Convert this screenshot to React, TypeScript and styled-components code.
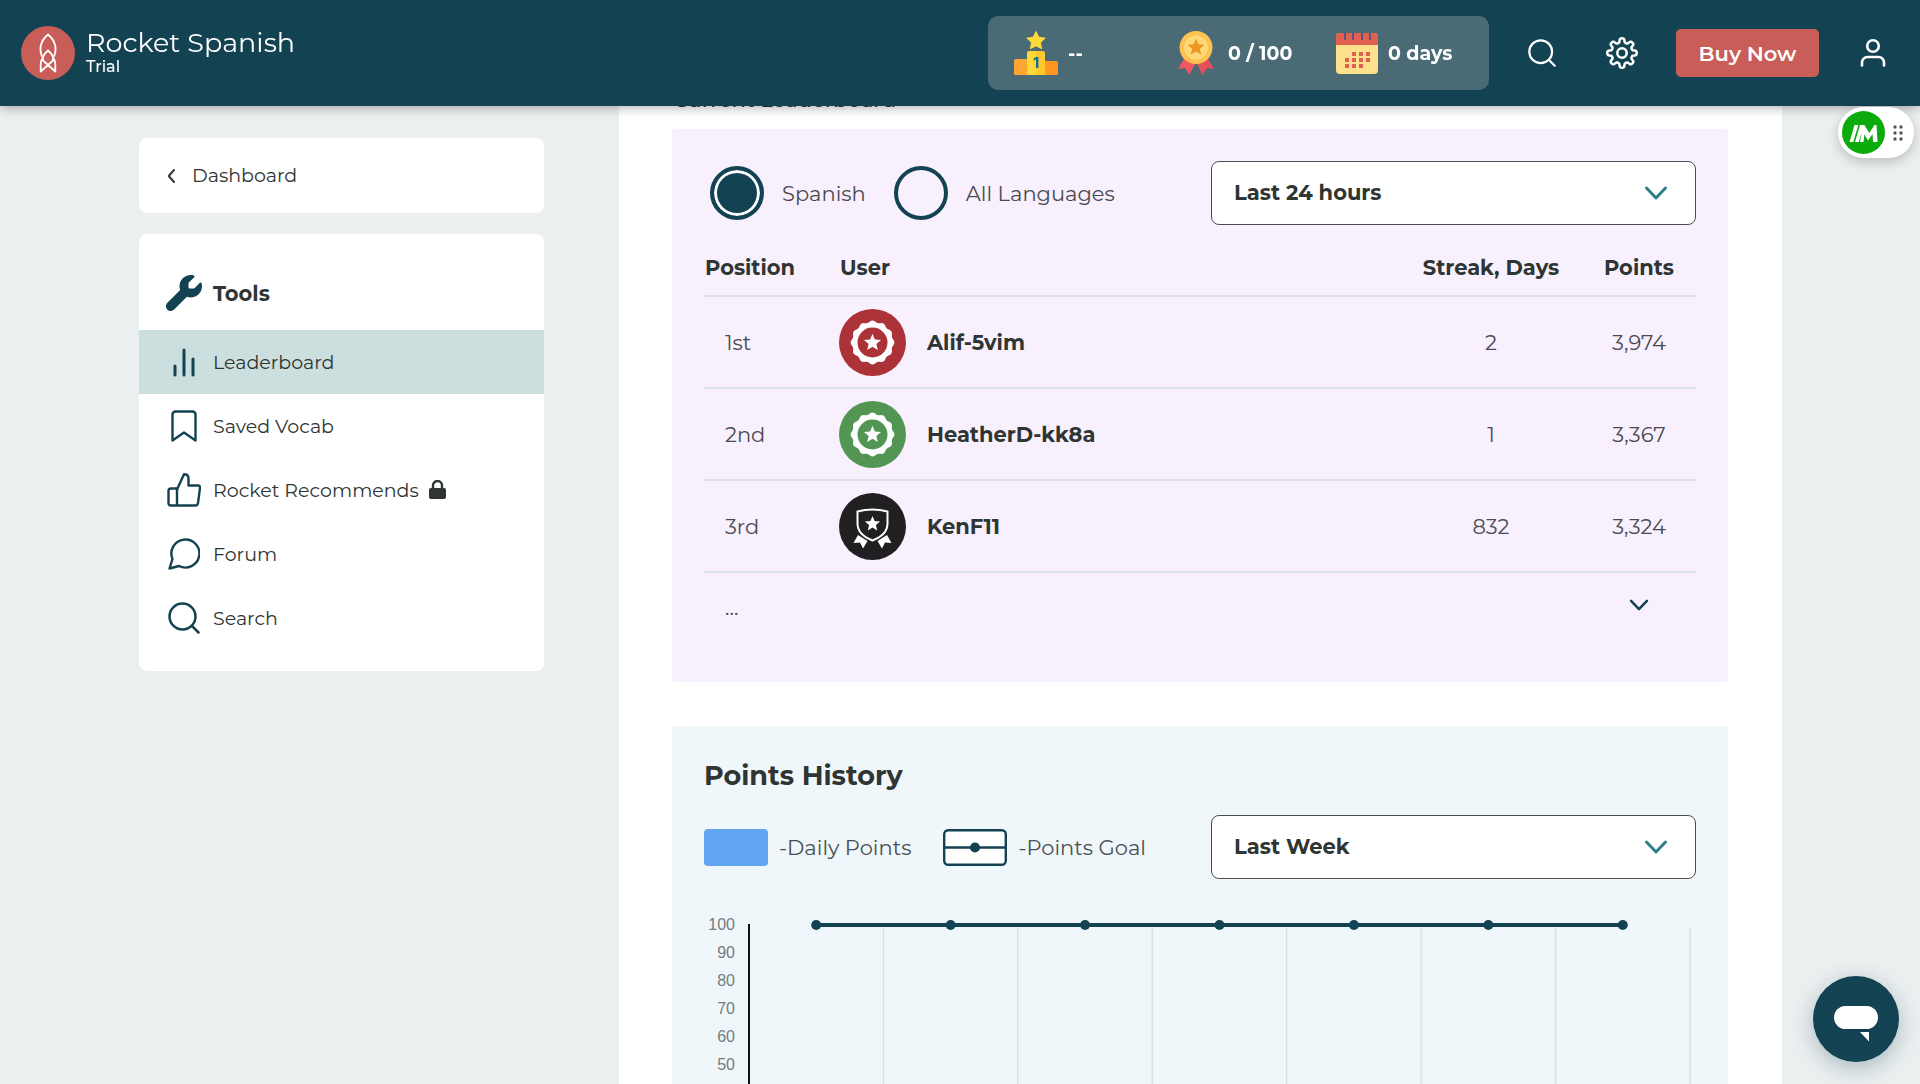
import React, { useState } from "react";
import styled, { createGlobalStyle } from "styled-components";

const navy = "#134252";
const ink = "#2e3532";
const sans = `Montserrat, Inter, "Liberation Sans", sans-serif`;

const GlobalStyle = createGlobalStyle`
  *, *::before, *::after { box-sizing: border-box; }
  body { margin: 0; background: #ebeff0; color: ${ink}; font-family: ${sans}; }
  button, select, input { font-family: inherit; color: inherit; }
  button { border: 0; padding: 0; background: none; cursor: pointer; }
  a { color: inherit; text-decoration: none; }
  h1, h2, h3, p, ul { margin: 0; padding: 0; }
  ul { list-style: none; }
  svg { display: block; flex: none; }
`;

const Shell = styled.div`
  height: 100vh;
  overflow: hidden;
`;

const TopBar = styled.header`
  position: fixed;
  inset: 0 0 auto 0;
  z-index: 10;
  height: 106px;
  padding: 0 30px 0 21px;
  display: flex;
  align-items: center;
  color: #fff;
  background: ${navy};
  box-shadow: 0 2px 10px rgba(0, 0, 0, 0.3);
`;

const Brand = styled.a`
  display: flex;
  align-items: center;
  gap: 11px;
  margin-right: auto;
`;

const BrandText = styled.span`
  padding-bottom: 4px;
`;

const BrandName = styled.span`
  display: block;
  font-size: 27px;
  line-height: 32px;
`;

const BrandPlan = styled.span`
  display: block;
  font-size: 16px;
  line-height: 16px;
  font-weight: 500;
`;

const Stats = styled.div`
  width: 501px;
  height: 74px;
  padding-left: 26px;
  display: grid;
  grid-template-columns: 160px 161px 1fr;
  align-items: center;
  border-radius: 10px;
  background: #4a6a76;
`;

const Stat = styled.div`
  display: flex;
  align-items: center;
  gap: 10px;
  font-size: 19px;
  font-weight: 700;
`;

const BarActions = styled.div`
  display: flex;
  align-items: center;
  gap: 46px;
  margin-left: 36px;
`;

const IconButton = styled.button`
  display: flex;
  justify-content: center;
  width: 34px;
`;

const BuyButton = styled.button`
  height: 48px;
  width: 143px;
  margin: 0 -9px;
  border-radius: 5px;
  font-size: 21px;
  font-weight: 600;
  background: #c95d58;
`;

const Page = styled.div`
  display: grid;
  grid-template-columns: 405px minmax(0, 1fr);
  gap: 75px;
  padding: 0 138px 0 139px;
`;

const Sidebar = styled.nav`
  display: flex;
  flex-direction: column;
  gap: 21px;
  padding-top: 138px;
`;

const SideCard = styled.div`
  background: #fff;
  border-radius: 8px;
`;

const BackLink = styled.a`
  display: flex;
  align-items: center;
  gap: 9px;
  height: 75px;
  padding-left: 26px;
  font-size: 19px;
`;

const ToolsTitle = styled.h2`
  display: flex;
  align-items: center;
  gap: 10px;
  padding: 32px 26px 10px;
  height: 96px;
  font-size: 21px;
  font-weight: 700;
`;

const ToolList = styled.ul`
  padding-bottom: 21px;
`;

const ToolLink = styled.a<{ $active?: boolean }>`
  display: flex;
  align-items: center;
  gap: 10px;
  height: 64px;
  padding: 0 26px;
  font-size: 19px;
  background: ${(p) => (p.$active ? "#ccdfdf" : "transparent")};
`;

const IconSlot = styled.span`
  display: flex;
  justify-content: center;
  width: 38px;
  color: ${navy};
`;

const Content = styled.main`
  display: flex;
  flex-direction: column;
  padding: 84px 54px 0 53px;
  background: #fff;
`;

const SectionTitle = styled.h2`
  padding: 0 1px;
  margin-bottom: 13px;
  font-size: 21px;
  line-height: 32px;
  font-weight: 500;
`;

const Panel = styled.section<{ $tone: string }>`
  padding: 32px;
  margin-bottom: 44px;
  border-radius: 4px;
  background: ${(p) => p.$tone};
`;

const PanelTitle = styled.h3`
  margin: 2px 0 23px;
  font-size: 27px;
  line-height: 32px;
  font-weight: 700;
`;

const ControlRow = styled.div`
  display: flex;
  justify-content: space-between;
  align-items: center;
`;

const RadioGroup = styled.div`
  display: flex;
  gap: 28px;
  padding-left: 6px;
`;

const RadioLabel = styled.label`
  display: flex;
  align-items: center;
  gap: 18px;
  font-size: 21px;
  color: #4a4a50;
`;

const Radio = styled.input`
  appearance: none;
  width: 54px;
  height: 54px;
  margin: 0;
  border: 4px solid ${navy};
  border-radius: 50%;
  &:checked {
    background: ${navy};
    box-shadow: inset 0 0 0 3px #fff;
  }
`;

const SelectBox = styled.div`
  position: relative;
  width: 485px;
  svg {
    position: absolute;
    right: 28px;
    top: 20px;
    pointer-events: none;
  }
`;

const Select = styled.select`
  appearance: none;
  width: 100%;
  height: 64px;
  padding: 0 22px 2px;
  border: 1px solid #4c4a50;
  border-radius: 8px;
  font-size: 21px;
  font-weight: 700;
  background: #fff;
`;

const Board = styled.table`
  width: 100%;
  margin-top: 14px;
  border-collapse: collapse;
  table-layout: fixed;
  font-size: 21px;
`;

const HeadCell = styled.th<{ $center?: boolean }>`
  height: 57px;
  padding: 0 1px;
  text-align: ${(p) => (p.$center ? "center" : "left")};
  font-weight: 700;
  border-bottom: 2px solid #dde1ec;
`;

const Cell = styled.td<{ $center?: boolean; $indent?: boolean }>`
  height: 92px;
  padding: 0 0 0 ${(p) => (p.$indent ? "21px" : "0")};
  text-align: ${(p) => (p.$center ? "center" : "left")};
  color: #4a4a50;
  border-bottom: 2px solid #dde1ec;
`;

const MoreCell = styled(Cell)`
  height: 78px;
  padding-bottom: 8px;
  border: 0;
`;

const MoreButton = styled.button`
  display: inline-flex;
  color: ${navy};
`;

const Player = styled.div`
  display: flex;
  align-items: center;
  gap: 21px;
  font-size: 21px;
  font-weight: 700;
  color: ${ink};
`;

const Legend = styled.div`
  display: flex;
  gap: 32px;
`;

const LegendItem = styled.div`
  display: flex;
  align-items: center;
  gap: 11px;
  font-size: 21px;
  color: #4a4f54;
`;

const Swatch = styled.span`
  width: 64px;
  height: 37px;
  border-radius: 4px;
  background: #61a5f0;
`;

const Chart = styled.div`
  display: flex;
  gap: 14px;
  margin: 32px 6px 0 0;
`;

const Scale = styled.ol`
  width: 31px;
  margin: 0;
  padding: 0;
  list-style: none;
  text-align: right;
  font-family: "Liberation Sans", Arial, sans-serif;
  font-size: 16px;
  line-height: 28px;
  color: #747c80;
`;

const Plot = styled.svg`
  flex: 1;
  min-width: 0;
  height: 282px;
  margin-top: 14px;
  overflow: visible;
`;

const FloatingTool = styled.div`
  position: fixed;
  z-index: 11;
  right: 6px;
  top: 107px;
  width: 76px;
  height: 51px;
  padding-left: 4px;
  display: flex;
  align-items: center;
  gap: 8px;
  border-radius: 26px;
  background: #fff;
  box-shadow: 0 4px 12px rgba(0, 0, 0, 0.2);
`;

const ChatButton = styled.button`
  position: fixed;
  right: 21px;
  bottom: 22px;
  width: 86px;
  height: 86px;
  display: flex;
  align-items: center;
  justify-content: center;
  border-radius: 50%;
  background: ${navy};
  box-shadow: 0 6px 22px rgba(19, 66, 82, 0.3);
`;

const star = (cx: number, cy: number, r: number, inner = 0.45) =>
  Array.from({ length: 10 }, (_, i) => {
    const rad = i % 2 ? r * inner : r;
    const a = (Math.PI / 5) * i - Math.PI / 2;
    return `${(cx + rad * Math.cos(a)).toFixed(2)},${(cy + rad * Math.sin(a)).toFixed(2)}`;
  }).join(" ");

const RocketLogo = () => (
  <svg width="54" height="54" viewBox="0 0 54 54" fill="none" stroke="#fff" strokeWidth="1.8" strokeLinejoin="round" strokeLinecap="round">
    <circle cx="27" cy="27" r="27" fill="#c95d58" stroke="none" />
    <path d="M20.800 30C17.500 21 20.500 14 27 8.500C33.500 14 36.500 21 33.200 30" />
    <path d="M27 24.500C23 28 21 31.500 22 34.500L34.300 45.500V37.500C34 34 33 32.500 31.500 30.500M27 24.500C31 28 33 31.500 32 34.500L19.700 45.500V37.500C20 34 21 32.500 22.500 30.500" />
  </svg>
);

const Podium = () => (
  <svg width="44" height="44" viewBox="0 0 44 44">
    <path d="M0 30a2 2 0 0 1 2-2h11v16H1a1 1 0 0 1-1-1z" fill="#ffa632" />
    <path d="M31 30h11a2 2 0 0 1 2 2v11a1 1 0 0 1-1 1H31z" fill="#ff9722" />
    <path d="M13 22a2 2 0 0 1 2-2h7v24h-9z" fill="#ffd83a" />
    <path d="M22 20h7a2 2 0 0 1 2 2v22h-9z" fill="#fdc92f" />
    <polygon points={star(22, 10, 10.5, 0.5)} fill="#fdda3c" />
    <text x="22" y="36.500" textAnchor="middle" fontFamily="Inter, sans-serif" fontWeight="800" fontSize="14" fill="#0f6f8c">1</text>
  </svg>
);

const Medal = () => (
  <svg width="44" height="44" viewBox="-2 0 44 44">
    <path d="M9 26 2 38l7-1 4.500 7L20 31z" fill="#f0565e" />
    <path d="M31 26l7 12-7-1-4.500 7L20 31z" fill="#e4505a" />
    <circle cx="20" cy="16.500" r="16.500" fill="#ffc24f" />
    <circle cx="20" cy="16.500" r="12" fill="#ffd977" />
    <polygon points={star(20, 16.5, 9)} fill="#ee9420" />
  </svg>
);

const calendarDots = [
  [17, 20], [24, 20], [31, 20],
  [10, 26], [17, 26], [24, 26], [31, 26],
  [10, 32], [17, 32], [24, 32],
];

const Calendar = () => (
  <svg width="43" height="44" viewBox="0 0 43 44">
    <rect x="1" y="2" width="42" height="41" rx="4" fill="#ffe08c" />
    <path d="M1 14V5a4 4 0 0 1 4-3h34a4 4 0 0 1 4 3v9z" fill="#e2604f" />
    {[9, 17, 26, 34].map((x) => (
      <rect key={x} x={x} y="2" width="2" height="7" fill="#54597a" />
    ))}
    {calendarDots.map(([x, y]) => (
      <rect key={`${x}-${y}`} x={x} y={y + 1} width="4" height="4" fill="#e2604f" />
    ))}
  </svg>
);

const SearchIcon = ({ size }: { size: number }) => (
  <svg width={size} height={size} viewBox="0 0 32 32" fill="none" stroke="currentColor" strokeWidth="2.500" strokeLinecap="round">
    <circle cx="14.500" cy="14.500" r="13" />
    <path d="M24 24l6.500 6.500" />
  </svg>
);

const gearPath = (() => {
  const steps = 160;
  return (
    Array.from({ length: steps }, (_, i) => {
      const a = (i / steps) * Math.PI * 2;
      const wave = Math.cos(a * 8);
      const r = 12.6 + 2.1 * Math.tanh(wave * 2.2);
      return `${i ? "L" : "M"}${(17 + r * Math.cos(a)).toFixed(2)} ${(17 + r * Math.sin(a)).toFixed(2)}`;
    }).join("") + "Z"
  );
})();

const GearIcon = () => (
  <svg width="34" height="34" viewBox="0 0 34 34" fill="none" stroke="currentColor" strokeWidth="2.500" strokeLinejoin="round">
    <path d={gearPath} />
    <circle cx="17" cy="17" r="4.700" />
  </svg>
);

const UserIcon = () => (
  <svg width="28" height="30" viewBox="0 0 28 30" fill="none" stroke="currentColor" strokeWidth="2.600" strokeLinecap="round">
    <circle cx="14" cy="8" r="5.800" />
    <path d="M3 27.500v-3a5.500 5.500 0 0 1 5.500-5.500h11a5.500 5.500 0 0 1 5.500 5.500v3" />
  </svg>
);

const BackChevron = () => (
  <svg width="18" height="18" viewBox="0 0 24 24" fill="none" stroke="currentColor" strokeWidth="2.600" strokeLinecap="round" strokeLinejoin="round">
    <path d="M12 4L5 12l7 8" />
  </svg>
);

const DownChevron = ({ size, color = "currentColor" }: { size: number; color?: string }) => (
  <svg width={size} height={size} viewBox="0 0 24 24" fill="none" stroke={color} strokeWidth="3" strokeLinecap="round" strokeLinejoin="round">
    <path d="M2.500 7l9.500 10 9.500-10" />
  </svg>
);

const WrenchIcon = () => (
  <svg width="36" height="36" viewBox="0 0 512 512" fill="currentColor">
    <path d="M352 320c88.400 0 160-71.600 160-160c0-15.300-2.200-30.100-6.200-44.200c-3.100-10.800-16.400-13.200-24.300-5.300l-76.800 76.800c-3 3-7.100 4.700-11.300 4.700H336c-8.800 0-16-7.200-16-16V118.600c0-4.200 1.700-8.300 4.700-11.300l76.800-76.800c7.900-7.900 5.400-21.200-5.300-24.300C382.100 2.200 367.300 0 352 0C263.600 0 192 71.600 192 160c0 19.100 3.400 37.500 9.500 54.500L19.900 396.100C7.200 408.800 0 426.100 0 444.100C0 481.600 30.400 512 67.900 512c18 0 35.300-7.200 48-19.900L297.500 310.500c17 6.200 35.400 9.500 54.500 9.500z" />
  </svg>
);

const BarsIcon = () => (
  <svg width="24" height="30" viewBox="0 0 24 30" fill="none" stroke="currentColor" strokeWidth="3" strokeLinecap="round">
    <path d="M3 19v9M12 3v25M21 12v16" />
  </svg>
);

const BookmarkIcon = () => (
  <svg width="26" height="32" viewBox="0 0 26 32" fill="none" stroke="currentColor" strokeWidth="2.400" strokeLinejoin="round">
    <path d="M1.500 30.500V4.500a3 3 0 0 1 3-3h17a3 3 0 0 1 3 3v26L13 22.500z" />
  </svg>
);

const ThumbIcon = () => (
  <svg width="34" height="34" viewBox="0 0 34 34" fill="none" stroke="currentColor" strokeWidth="2.400" strokeLinejoin="round">
    <path d="M10 15.500H4a2.500 2.500 0 0 0-2.500 2.500v12a2.500 2.500 0 0 0 2.500 2.500h24a3 3 0 0 0 3-2.500l2-15a2 2 0 0 0-2-2.500h-9.500V5.500C21.500 2.500 20 1.200 17 1.200L10 16.500z" />
    <path d="M10 15.500v17" />
  </svg>
);

const BubbleIcon = () => (
  <svg width="32" height="32" viewBox="0 0 32 32" fill="none" stroke="currentColor" strokeWidth="2.400" strokeLinejoin="round">
    <path d="M1.500 30.500l3-9.500A14 14 0 1 1 11 28z" />
  </svg>
);

const LockIcon = () => (
  <svg width="17" height="20" viewBox="0 0 17 20">
    <path d="M4 9V5.500a4.500 4.500 0 0 1 9 0V9" fill="none" stroke={ink} strokeWidth="2.400" />
    <rect y="8" width="17" height="11" rx="2" fill={ink} />
  </svg>
);

const scallop =
  Array.from({ length: 120 }, (_, i) => {
    const a = (i / 120) * Math.PI * 2;
    const r = 21 + 0.9 * Math.cos(a * 12);
    return `${i ? "L" : "M"}${(33.5 + r * Math.cos(a)).toFixed(2)} ${(33.5 + r * Math.sin(a)).toFixed(2)}`;
  }).join("") + "Z";

const RosetteBadge = ({ tone }: { tone: string }) => (
  <svg width="67" height="67" viewBox="0 0 67 67">
    <circle cx="33.500" cy="33.500" r="33.500" fill={tone} />
    <path d={scallop} fill="#fff" />
    <circle cx="33.500" cy="33.500" r="15" fill={tone} />
    <polygon points={star(33.5, 33.8, 9)} fill="#fff" />
  </svg>
);

const ShieldBadge = () => (
  <svg width="67" height="67" viewBox="0 0 67 67">
    <circle cx="33.500" cy="33.500" r="33.500" fill="#211f22" />
    <path d="M19 42l-4.500 8 6.500-.5 3 6 4.500-7.500zM48 42l4.500 8-6.500-.5-3 6-4.500-7.500z" fill="#fff" />
    <path d="M33.500 16.500c6 0 10.500.8 15 2v12c0 8-6 13.500-15 17-9-3.500-15-9-15-17v-12c4.500-1.200 9-2 15-2z" fill="#211f22" stroke="#fff" strokeWidth="2" />
    <polygon points={star(33.5, 31, 8)} fill="#fff" />
  </svg>
);

const GoalSwatch = () => (
  <svg width="64" height="37" viewBox="0 0 64 37">
    <rect x="1.200" y="1.200" width="61.600" height="34.600" rx="4" fill="#fff" stroke={navy} strokeWidth="2.400" />
    <path d="M1 18.500h62" stroke={navy} strokeWidth="2.400" />
    <circle cx="32" cy="18.500" r="5" fill={navy} />
  </svg>
);

const tools = [
  { label: "Leaderboard", icon: <BarsIcon />, active: true },
  { label: "Saved Vocab", icon: <BookmarkIcon /> },
  { label: "Rocket Recommends", icon: <ThumbIcon />, locked: true },
  { label: "Forum", icon: <BubbleIcon /> },
  { label: "Search", icon: <SearchIcon size={32} /> },
];

const players = [
  { place: "1st", name: "Alif-5vim", streak: "2", points: "3,974", badge: <RosetteBadge tone="#ab3236" /> },
  { place: "2nd", name: "HeatherD-kk8a", streak: "1", points: "3,367", badge: <RosetteBadge tone="#539654" /> },
  { place: "3rd", name: "KenF11", streak: "832", points: "3,324", badge: <ShieldBadge /> },
];

const goals = [100, 100, 100, 100, 100, 100, 100];
const ticks = [100, 90, 80, 70, 60, 50];

const Dropdown = ({ label, options }: { label: string; options: string[] }) => (
  <SelectBox>
    <Select aria-label={label}>
      {options.map((o) => (
        <option key={o}>{o}</option>
      ))}
    </Select>
    <DownChevron size={24} color="#2f7f8b" />
  </SelectBox>
);

const PointsChart = () => {
  const slot = 100 / goals.length;
  return (
    <Chart>
      <Scale>
        {ticks.map((t) => (
          <li key={t}>{t}</li>
        ))}
      </Scale>
      <Plot role="img" aria-label="Points goal per day">
        {goals.map((_, i) => (
          <line key={i} x1={`${slot * (i + 1)}%`} x2={`${slot * (i + 1)}%`} y1="3" y2="282" stroke="#dae2e5" strokeWidth="1.500" />
        ))}
        <line x1="0" x2="0" y1="-1" y2="282" stroke="#111" strokeWidth="2" />
        <line x1={`${slot / 2}%`} x2={`${100 - slot / 2}%`} y1="0" y2="0" stroke={navy} strokeWidth="4" />
        {goals.map((g, i) => (
          <circle key={i} cx={`${slot * (i + 0.5)}%`} cy={(100 - g) * 2.8} r="5" fill={navy} />
        ))}
      </Plot>
    </Chart>
  );
};

export default function App() {
  const [scope, setScope] = useState("Spanish");
  return (
    <Shell>
      <GlobalStyle />
      <TopBar>
        <Brand href="#">
          <RocketLogo />
          <BrandText>
            <BrandName>Rocket Spanish</BrandName>
            <BrandPlan>Trial</BrandPlan>
          </BrandText>
        </Brand>
        <Stats>
          <Stat><Podium />--</Stat>
          <Stat><Medal />0 / 100</Stat>
          <Stat><Calendar />0 days</Stat>
        </Stats>
        <BarActions>
          <IconButton aria-label="Search"><SearchIcon size={28} /></IconButton>
          <IconButton aria-label="Settings"><GearIcon /></IconButton>
          <BuyButton>Buy Now</BuyButton>
          <IconButton aria-label="Account"><UserIcon /></IconButton>
        </BarActions>
      </TopBar>

      <Page>
        <Sidebar>
          <SideCard>
            <BackLink href="#"><BackChevron />Dashboard</BackLink>
          </SideCard>
          <SideCard>
            <ToolsTitle><IconSlot><WrenchIcon /></IconSlot>Tools</ToolsTitle>
            <ToolList>
              {tools.map((t) => (
                <li key={t.label}>
                  <ToolLink href="#" $active={t.active}>
                    <IconSlot>{t.icon}</IconSlot>
                    {t.label}
                    {t.locked && <LockIcon />}
                  </ToolLink>
                </li>
              ))}
            </ToolList>
          </SideCard>
        </Sidebar>

        <Content>
          <SectionTitle>Current Leaderboard</SectionTitle>
          <Panel $tone="#f8f0fd">
            <ControlRow>
              <RadioGroup>
                {["Spanish", "All Languages"].map((s) => (
                  <RadioLabel key={s}>
                    <Radio type="radio" name="scope" checked={scope === s} onChange={() => setScope(s)} />
                    {s}
                  </RadioLabel>
                ))}
              </RadioGroup>
              <Dropdown label="Leaderboard period" options={["Last 24 hours", "Last 7 days", "Last 30 days"]} />
            </ControlRow>
            <Board>
              <colgroup>
                <col style={{ width: 135 }} />
                <col />
                <col style={{ width: 182 }} />
                <col style={{ width: 114 }} />
              </colgroup>
              <thead>
                <tr>
                  <HeadCell>Position</HeadCell>
                  <HeadCell>User</HeadCell>
                  <HeadCell $center>Streak, Days</HeadCell>
                  <HeadCell $center>Points</HeadCell>
                </tr>
              </thead>
              <tbody>
                {players.map((p) => (
                  <tr key={p.name}>
                    <Cell $indent>{p.place}</Cell>
                    <Cell><Player>{p.badge}{p.name}</Player></Cell>
                    <Cell $center>{p.streak}</Cell>
                    <Cell $center>{p.points}</Cell>
                  </tr>
                ))}
                <tr>
                  <MoreCell $indent colSpan={3}>...</MoreCell>
                  <MoreCell $center>
                    <MoreButton aria-label="Show more"><DownChevron size={20} /></MoreButton>
                  </MoreCell>
                </tr>
              </tbody>
            </Board>
          </Panel>

          <Panel $tone="#eff7fb">
            <PanelTitle>Points History</PanelTitle>
            <ControlRow>
              <Legend>
                <LegendItem><Swatch />-Daily Points</LegendItem>
                <LegendItem><GoalSwatch />-Points Goal</LegendItem>
              </Legend>
              <Dropdown label="History period" options={["Last Week", "Last Month", "Last Year"]} />
            </ControlRow>
            <PointsChart />
          </Panel>
        </Content>
      </Page>

      <FloatingTool>
        <svg width="43" height="43" viewBox="0 0 43 43">
          <circle cx="21.500" cy="21.500" r="21.500" fill="#0cab0c" />
          <path d="M7.500 31l5-17h3.800l-5 17zM13 31l5-17h3.800l-5 17zM18 31l1.800-11 1-6h1.500l5 8 5.200-8h2l1 17h-4.500l-.5-8-4.500 6.500-3.500-6L21.500 31z" fill="#fff" />
        </svg>
        <svg width="10" height="16" viewBox="0 0 10 16" fill="#555">
          {[2, 8, 14].map((y) => (
            <React.Fragment key={y}>
              <circle cx="2" cy={y} r="1.700" />
              <circle cx="8" cy={y} r="1.700" />
            </React.Fragment>
          ))}
        </svg>
      </FloatingTool>
      <ChatButton aria-label="Open chat">
        <svg width="44" height="46" viewBox="0 0 44 46" fill="#fff">
          <rect y="10" width="44" height="23" rx="11.500" />
          <path d="M26 36h9v9.500z" />
        </svg>
      </ChatButton>
    </Shell>
  );
}
